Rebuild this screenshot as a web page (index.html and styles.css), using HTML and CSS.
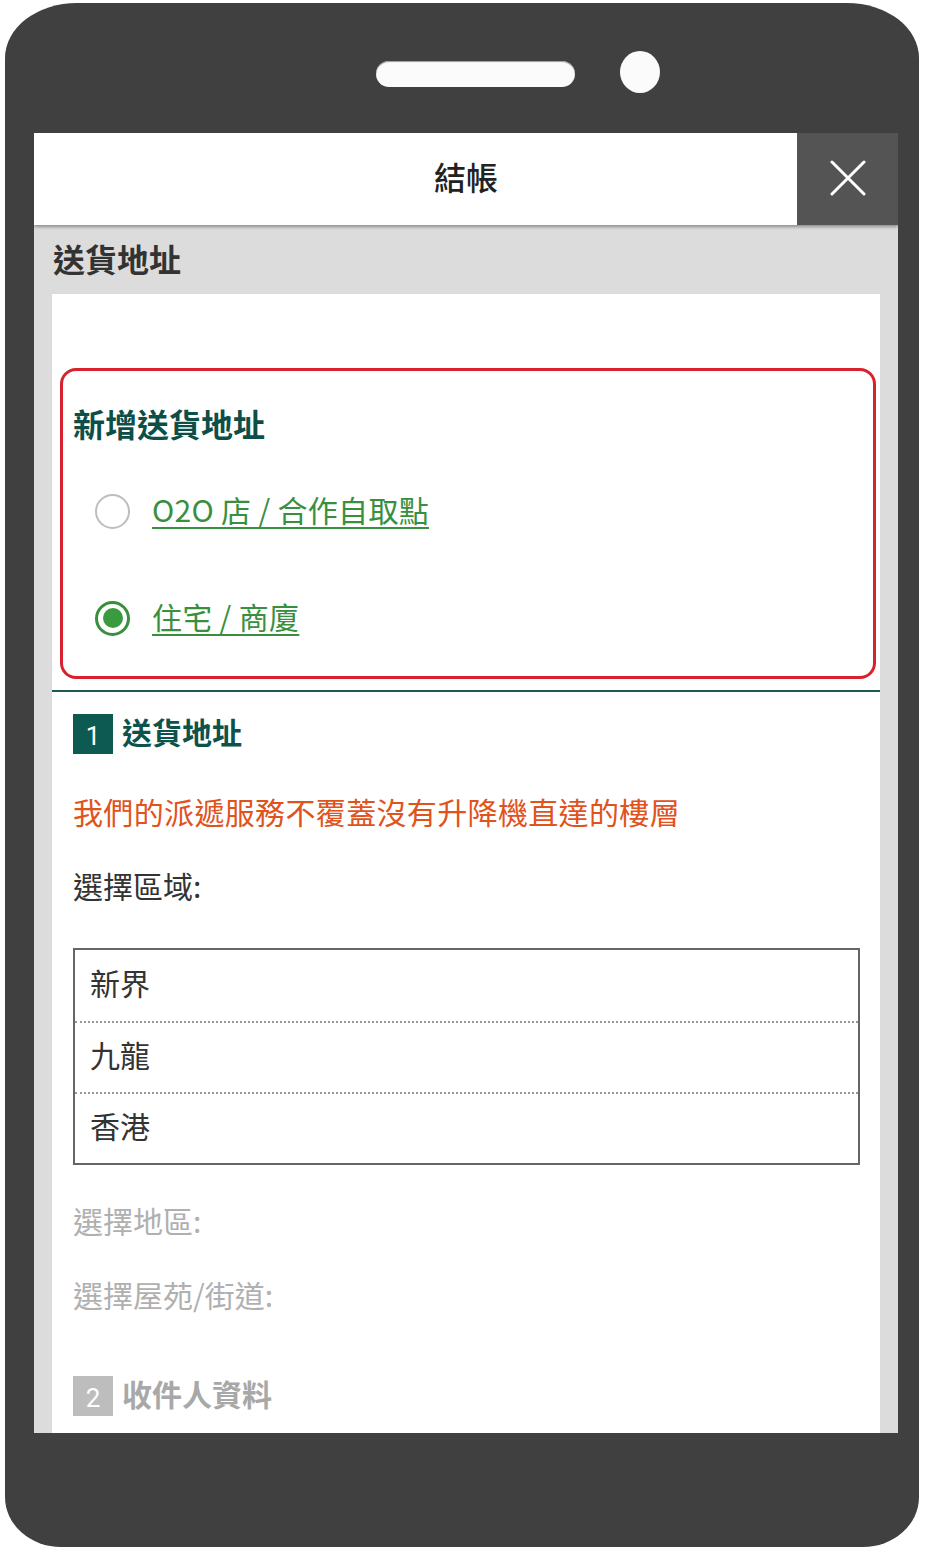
FILE: index.html
```html
<!DOCTYPE html>
<html lang="zh-Hant">
<head>
<meta charset="utf-8">
<title>結帳</title>
<link rel="stylesheet" href="styles.css">
</head>
<body>
<div class="phone">
  <div class="phone-top">
    <div class="speaker"></div>
    <div class="camera"></div>
  </div>
  <div class="screen">
    <div class="header">
      <div class="header-title">結帳</div>
      <div class="close">
        <svg width="36" height="36" viewBox="0 0 36 36"><path d="M2 2 L34 34 M34 2 L2 34" stroke="#fff" stroke-width="3" stroke-linecap="round" fill="none"/></svg>
      </div>
    </div>
    <div class="page">
      <div class="page-title">送貨地址</div>
      <div class="card">
        <div class="choice-box">
          <div class="choice-title">新增送貨地址</div>
          <div class="radio-row first">
            <span class="radio"></span>
            <a class="radio-label">O2O&nbsp;店 / 合作自取點</a>
          </div>
          <div class="radio-row second">
            <span class="radio checked"></span>
            <a class="radio-label">住宅 / 商廈</a>
          </div>
        </div>
        <div class="divider"></div>
        <div class="section">
          <div class="step">
            <span class="step-num">1</span>
            <span class="step-title">送貨地址</span>
          </div>
          <div class="warning">我們的派遞服務不覆蓋沒有升降機直達的樓層</div>
          <div class="label">選擇區域:</div>
          <div class="select">
            <div class="option">新界</div>
            <div class="option">九龍</div>
            <div class="option">香港</div>
          </div>
          <div class="label muted first-muted">選擇地區:</div>
          <div class="label muted">選擇屋苑/街道:</div>
          <div class="step step-two">
            <span class="step-num grey">2</span>
            <span class="step-title grey">收件人資料</span>
          </div>
        </div>
      </div>
    </div>
  </div>
</div>
</body>
</html>
```
FILE: styles.css
```css
* { box-sizing: border-box; }
html, body { margin: 0; padding: 0; background: #fff; }
body {
  font-family: "Noto Sans CJK TC", "Noto Sans", sans-serif;
  width: 928px;
  height: 1556px;
  overflow: hidden;
}
.phone {
  margin: 3px 0 0 5px;
  width: 914px;
  height: 1544px;
  background: #404040;
  border-radius: 72px 72px 56px 56px / 55px 55px 50px 50px;
  padding: 0 20px 0 29px;
  display: flex;
  flex-direction: column;
}
.phone-top {
  height: 130px;
  display: flex;
  align-items: center;
  padding-left: 342px;
  gap: 45px;
  padding-top: 12px;
}
.speaker {
  width: 199px;
  height: 26px;
  border-radius: 13px;
  background: #fbfbfb;
  box-shadow: 0 1px 1px #999 inset;
}
.camera {
  width: 40px;
  height: 42px;
  border-radius: 50%;
  background: #fbfbfb;
  margin-top: -4px;
}
.screen {
  width: 864px;
  height: 1300px;
  background: #dcdcdc;
  overflow: hidden;
  display: flex;
  flex-direction: column;
}
.header {
  height: 92px;
  background: #fff;
  display: flex;
  box-shadow: 0 2px 3px rgba(0,0,0,0.35);
  position: relative;
  z-index: 1;
  flex-shrink: 0;
}
.header-title {
  flex: 1;
  padding-left: 101px;
  padding-bottom: 6px;
  display: flex;
  align-items: center;
  justify-content: center;
  font-size: 32px;
  color: #222;
  font-weight: 500;
}
.close {
  width: 101px;
  background: #545454;
  display: flex;
  align-items: center;
  justify-content: center;
  padding-bottom: 2px;
}
.page {
  flex: 1;
  display: flex;
  flex-direction: column;
}
.page-title {
  height: 69px;
  padding-left: 19px;
  padding-bottom: 4px;
  display: flex;
  align-items: center;
  font-size: 32px;
  font-weight: 700;
  color: #333;
  flex-shrink: 0;
}
.card {
  flex: 1;
  margin: 0 18px;
  background: #fff;
  padding-top: 74px;
}
.choice-box {
  margin: 0 4px 0 8px;
  height: 311px;
  border: 3px solid #d8222e;
  border-radius: 16px;
  padding: 32px 0 0 10px;
}
.choice-title {
  height: 40px;
  line-height: 40px;
  font-size: 32px;
  font-weight: 700;
  color: #0d4f48;
}
.radio-row {
  height: 60px;
  display: flex;
  align-items: center;
  padding-left: 22px;
}
.radio-row.first { margin-top: 38px; }
.radio-row.second { margin-top: 47px; }
.radio {
  width: 35px;
  height: 35px;
  border-radius: 50%;
  border: 2px solid #bdbdbd;
  flex-shrink: 0;
}
.radio.checked {
  border: 3px solid #3a8f3e;
  display: flex;
  align-items: center;
  justify-content: center;
}
.radio.checked::after {
  content: "";
  width: 20px;
  height: 20px;
  border-radius: 50%;
  background: #3a9a3e;
}
.radio-label {
  margin-left: 22px;
  margin-top: -4px;
  font-size: 30px;
  letter-spacing: 0.3px;
  color: #3a8f3e;
  text-decoration: underline;
  text-underline-offset: 5px;
  text-decoration-thickness: 2px;
  font-weight: 400;
}
.divider {
  margin-top: 11px;
  height: 2px;
  background: #1d5a54;
}
.section {
  padding: 22px 20px 0 21px;
}
.step {
  display: flex;
  align-items: center;
  height: 40px;
}
.step-num {
  width: 40px;
  height: 40px;
  background: #0c5a52;
  color: #fff;
  font-family: "Roboto", "Noto Sans", sans-serif;
  font-size: 26px;
  display: flex;
  align-items: center;
  justify-content: center;
  padding-top: 4px;
}
.step-num.grey { background: #bdbdbd; }
.step-title {
  margin-left: 9px;
  font-size: 30px;
  font-weight: 700;
  color: #0d524b;
  margin-top: -6px;
}
.step-title.grey { color: #a8a8a8; }
.warning {
  margin-top: 37px;
  height: 40px;
  line-height: 40px;
  font-size: 30px;
  letter-spacing: 0.35px;
  color: #e0531c;
}
.label {
  margin-top: 34px;
  height: 40px;
  line-height: 40px;
  font-size: 30px;
  color: #333;
}
.label.muted { color: #b0b0b0; }
.select {
  margin-top: 43px;
  width: 787px;
  border: 2px solid #666;
}
.option {
  height: 71px;
  display: flex;
  align-items: center;
  padding-left: 15px;
  font-size: 30px;
  color: #333;
  padding-bottom: 7px;
}
.option + .option {
  border-top: 2px dotted #999;
}
.label.first-muted { margin-top: 35px; }
.step-two { margin-top: 62px; }
```
